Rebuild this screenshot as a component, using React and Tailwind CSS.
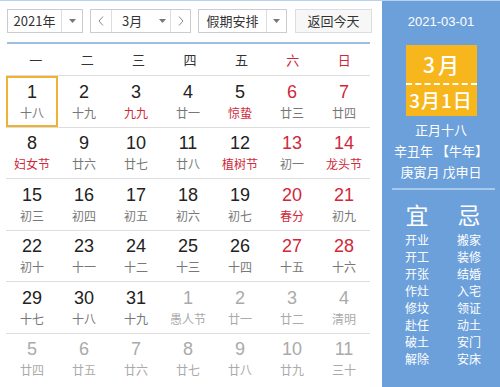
import React from "react";

const CJK = { fontFamily: '"Noto Sans CJK SC", "Liberation Sans", sans-serif' };
const NUM = { fontFamily: '"Liberation Sans", "Noto Sans CJK SC", sans-serif' };

const rows = [
  [["1", "十八"], ["2", "十九"], ["3", "九九", "r"], ["4", "廿一"], ["5", "惊蛰", "r"], ["6", "廿三", "", "w"], ["7", "廿四", "", "w"]],
  [["8", "妇女节", "r"], ["9", "廿六"], ["10", "廿七"], ["11", "廿八"], ["12", "植树节", "r"], ["13", "初一", "", "w"], ["14", "龙头节", "r", "w"]],
  [["15", "初三"], ["16", "初四"], ["17", "初五"], ["18", "初六"], ["19", "初七"], ["20", "春分", "r", "w"], ["21", "初九", "", "w"]],
  [["22", "初十"], ["23", "十一"], ["24", "十二"], ["25", "十三"], ["26", "十四"], ["27", "十五", "", "w"], ["28", "十六", "", "w"]],
  [["29", "十七"], ["30", "十八"], ["31", "十九"], ["1", "愚人节", "", "", "o"], ["2", "廿一", "", "", "o"], ["3", "廿二", "", "", "o"], ["4", "清明", "", "", "o"]],
  [["5", "廿四", "", "", "o"], ["6", "廿五", "", "", "o"], ["7", "廿六", "", "", "o"], ["8", "廿七", "", "", "o"], ["9", "廿八", "", "", "o"], ["10", "廿九", "", "", "o"], ["11", "三十", "", "", "o"]],
];

const Caret = () => (
  <svg width="7" height="4" viewBox="0 0 7 4"><path d="M0 0H7L3.5 4Z" fill="#777" /></svg>
);
const Chev = ({ dir }) => (
  <svg width="6" height="10" viewBox="0 0 6 10">
    <path d={dir === "l" ? "M5 0.5L1 5L5 9.5" : "M1 0.5L5 5L1 9.5"} fill="none" stroke="#888" strokeWidth="1" />
  </svg>
);

const yi = ["开业", "开工", "开张", "作灶", "修坟", "赴任", "破土", "解除"];
const ji = ["搬家", "装修", "结婚", "入宅", "领证", "动土", "安门", "安床"];

export default function App() {
  return (
    <div className="w-[500px] h-[387px] flex overflow-hidden border-t border-[#b9d3ef] bg-white" style={CJK}>
      <div className="w-[382px] h-full bg-white flex flex-col">
        <div className="flex items-start pt-[8px] pl-[7px] text-[13px] text-[#333]">
          <div className="w-[76px] h-[24px] border border-[#ccc] flex">
            <div className="w-[54px] flex items-center justify-center border-r border-[#ddd]">2021年</div>
            <div className="flex-1 flex items-center justify-center"><Caret /></div>
          </div>
          <div className="ml-[7px] w-[101px] h-[24px] border border-[#ccc] flex">
            <div className="w-[21px] flex items-center justify-center border-r border-[#ddd]"><Chev dir="l" /></div>
            <div className="w-[59px] flex items-center border-r border-[#ddd] pl-[10px]">
              <span>3月</span>
              <span className="ml-[17px] flex"><Caret /></span>
            </div>
            <div className="flex-1 flex items-center justify-center"><Chev dir="r" /></div>
          </div>
          <div className="ml-[7px] w-[89px] h-[24px] border border-[#ccc] flex">
            <div className="w-[68px] flex items-center justify-center border-r border-[#ddd]">假期安排</div>
            <div className="flex-1 flex items-center justify-center"><Caret /></div>
          </div>
          <div className="ml-[8px] w-[77px] h-[24px] border border-[#ddd] bg-[#f7f7f7] flex items-center justify-center">返回今天</div>
        </div>
        <div className="mt-[9px] ml-[7px] w-[363px] h-[2px] bg-[#9dbde3]"></div>
        <div className="ml-[6px] w-[364px] grid grid-cols-7 h-[31px] items-center text-[13px] pl-[4px]">
          {["一", "二", "三", "四", "五", "六", "日"].map((d, i) => (
            <div key={d} className={"text-center " + (i >= 5 ? "text-[#d0283a]" : "text-[#333]")}>{d}</div>
          ))}
        </div>
        <div className="ml-[6px] w-[364px] flex flex-col">
          {rows.map((row, ri) => (
            <div key={ri} className="grid grid-cols-7 h-[51.5px] border-t border-[#ddd]">
              {row.map(([n, l, lr, w, o], ci) => {
                const sel = ri === 0 && ci === 0;
                const numColor = o ? "text-[#aaa]" : w ? "text-[#d0283a]" : "text-[#222]";
                const lunColor = o ? "text-[#aaa]" : lr ? "text-[#d0283a]" : "text-[#777]";
                return (
                  <div key={ci} className={"flex flex-col items-center justify-center " + (sel ? "border-2 border-[#f0b232]" : "")}>
                    <div className={"text-[18px] leading-[20px] " + numColor} style={NUM}>{n}</div>
                    <div className={"text-[12px] leading-[16px] mt-[3px] " + lunColor}>{l}</div>
                  </div>
                );
              })}
            </div>
          ))}
        </div>
      </div>
      <div className="flex-1 h-full bg-[#6ca0da] flex flex-col items-center text-white">
        <div className="mt-[13px] text-[13px] leading-[16px]" style={NUM}>2021-03-01</div>
        <div className="mt-[15px] w-[71px] h-[71px] bg-[#f6b61c] flex flex-col">
          <div className="h-[38px] flex items-center justify-center text-[21px] font-medium tracking-[3px] pt-[2px] pl-[3px]">3月</div>
          <div className="border-t-2 border-dashed border-white"></div>
          <div className="flex-1 flex items-center justify-center text-[19px] font-medium tracking-[1px]">3月1日</div>
        </div>
        <div className="mt-[3px] text-[13px] leading-[21px] text-center">
          <div>正月十八</div>
          <div>辛丑年 【牛年】</div>
          <div>庚寅月 戊申日</div>
        </div>
        <div className="mt-[6px] ml-[5px] w-[103px] h-[2px] bg-[#a8c8ee]"></div>
        <div className="mt-[9px] ml-[4px] grid grid-cols-2 w-[104px]">
          <div className="flex flex-col items-center">
            <div className="text-[23px] leading-[30px]">宜</div>
            <div className="mt-[2px] flex flex-col items-center text-[12px] leading-[17px]">
              {yi.map((t) => <div key={t}>{t}</div>)}
            </div>
          </div>
          <div className="flex flex-col items-center">
            <div className="text-[23px] leading-[30px]">忌</div>
            <div className="mt-[2px] flex flex-col items-center text-[12px] leading-[17px]">
              {ji.map((t) => <div key={t}>{t}</div>)}
            </div>
          </div>
        </div>
      </div>
    </div>
  );
}
